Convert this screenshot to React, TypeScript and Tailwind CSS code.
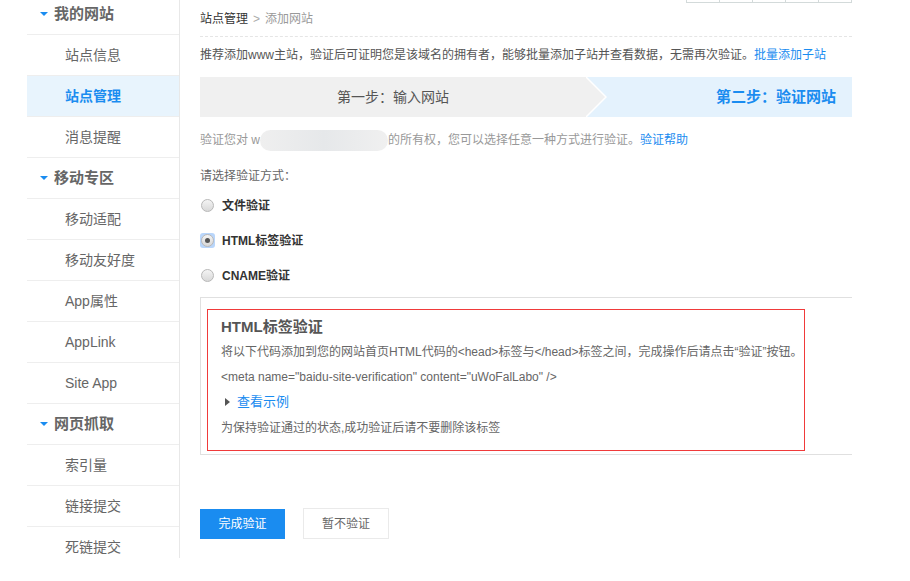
import React from 'react';

const FONT = '"Liberation Sans", "Noto Sans CJK SC", sans-serif';

type NavItem = { label: string; header?: boolean; active?: boolean };

const nav: NavItem[] = [
  { label: '我的网站', header: true },
  { label: '站点信息' },
  { label: '站点管理', active: true },
  { label: '消息提醒' },
  { label: '移动专区', header: true },
  { label: '移动适配' },
  { label: '移动友好度' },
  { label: 'App属性' },
  { label: 'AppLink' },
  { label: 'Site App' },
  { label: '网页抓取', header: true },
  { label: '索引量' },
  { label: '链接提交' },
  { label: '死链提交' },
];

function Caret() {
  return (
    <svg width="8" height="6" viewBox="0 0 8 6" className="mr-[6px]">
      <polygon points="0,1 8,1 4,5" fill="#1a8cf0" />
    </svg>
  );
}

function Sidebar() {
  return (
    <aside className="ml-[27px] w-[153px] h-[558px] overflow-hidden border-r border-[#e8e8e8] shrink-0">
      <div className="-mt-[6px]">
        {nav.map((item) => (
          <div
            key={item.label}
            className={
              'h-[41px] flex items-center border-b border-[#eeeeee] ' +
              (item.active ? 'bg-[#e8f4fd]' : '')
            }
          >
            {item.header ? (
              <div className="flex items-center pl-[13px] text-[15px] font-bold text-[#666]">
                <Caret />
                {item.label}
              </div>
            ) : (
              <div
                className={
                  'pl-[38px] text-[14px] ' +
                  (item.active ? 'font-bold text-[#1a8cf0]' : 'text-[#666]')
                }
              >
                {item.label}
              </div>
            )}
          </div>
        ))}
      </div>
    </aside>
  );
}

function Radio({ checked, label }: { checked?: boolean; label: string }) {
  return (
    <div className="h-[35px] flex items-center">
      <span
        className={
          'w-[15px] h-[15px] flex items-center justify-center rounded-[3px] ' +
          (checked ? 'bg-[#b9d6fb]' : '')
        }
      >
        <span className="w-[13px] h-[13px] rounded-full border border-[#b8b8b8] bg-gradient-to-b from-[#f4f4f4] to-[#d8d8d8] flex items-center justify-center">
          {checked && <span className="w-[5px] h-[5px] rounded-full bg-[#555]" />}
        </span>
      </span>
      <span className="ml-[7px] text-[12px] font-bold text-[#333]">{label}</span>
    </div>
  );
}

function Steps() {
  return (
    <div className="mt-[4px] h-[40px] flex bg-[#e4f2fd]">
      <div className="w-[386px] bg-[#f0f0f0] flex items-center justify-center text-[14px] text-[#555]">
        第一步：输入网站
      </div>
      <svg width="21" height="40" viewBox="0 0 21 40" className="shrink-0">
        <polygon points="0,0 20,20 0,40" fill="#f0f0f0" />
        <polyline points="0,0 20,20 0,40" fill="none" stroke="#ffffff" strokeWidth="1.5" />
      </svg>
      <div className="flex-1 flex items-center justify-end pr-[16px] text-[15px] font-bold text-[#1a8cf0]">
        第二步：验证网站
      </div>
    </div>
  );
}

function HtmlPanel() {
  return (
    <div className="mt-[4px] border-t border-b border-l border-[#e0e0e0] pl-[6px] pt-[11px] pb-[3px]">
      <div className="w-[598px] h-[142px] border border-[#f03a3a] pl-[13px] pt-[6px] text-[12px] text-[#666]">
        <div className="h-[23px] flex items-center text-[15px] font-bold text-[#555]">HTML标签验证</div>
        <div className="h-[25px] flex items-center">
          将以下代码添加到您的网站首页HTML代码的&lt;head&gt;标签与&lt;/head&gt;标签之间，完成操作后请点击“验证”按钮。
        </div>
        <div className="h-[25px] flex items-center">
          &lt;meta name="baidu-site-verification" content="uWoFalLabo" /&gt;
        </div>
        <div className="h-[26px] flex items-center">
          <svg width="5" height="8" viewBox="0 0 5 8" className="ml-[4px] mr-[7px]">
            <polygon points="0,0 5,4 0,8" fill="#555" />
          </svg>
          <span className="text-[13px] text-[#1a8cf0]">查看示例</span>
        </div>
        <div className="h-[25px] flex items-center">为保持验证通过的状态,成功验证后请不要删除该标签</div>
      </div>
    </div>
  );
}

export default function App() {
  return (
    <div className="w-[910px] h-[581px] bg-white flex overflow-hidden" style={{ fontFamily: FONT }}>
      <Sidebar />
      <main className="ml-[20px] w-[652px] shrink-0">
        <div className="h-[37px] flex justify-between items-start border-b border-dashed border-[#e5e5e5]">
          <div className="h-[37px] flex items-center text-[12px]">
            <span className="text-[#333]">站点管理</span>
            <span className="text-[#aaa] mx-[5px]">&gt;</span>
            <span className="text-[#999]">添加网站</span>
          </div>
          <div className="flex h-[3px] border-b border-l border-[#d3dada]">
            {[0, 1, 2, 3, 4].map((i) => (
              <div key={i} className="w-[33px] border-r border-[#d3dada]" />
            ))}
          </div>
        </div>
        <div className="h-[36px] flex items-center text-[12px] text-[#555]">
          推荐添加www主站，验证后可证明您是该域名的拥有者，能够批量添加子站并查看数据，无需再次验证。
          <span className="text-[#1a8cf0]">批量添加子站</span>
        </div>
        <Steps />
        <div className="h-[46px] flex items-center text-[12px] text-[#999]">
          验证您对 w
          <span className="inline-block w-[128px] h-[21px] rounded-full bg-gradient-to-r from-[#efefef] via-[#e6e8ea] to-[#f0f0f0]" />
          的所有权，您可以选择任意一种方式进行验证。
          <span className="text-[#1a8cf0]">验证帮助</span>
        </div>
        <div className="h-[26px] flex items-center text-[12px] text-[#666]">请选择验证方式：</div>
        <div className="-mt-[1px]">
          <Radio label="文件验证" />
          <Radio label="HTML标签验证" checked />
          <Radio label="CNAME验证" />
        </div>
        <HtmlPanel />
        <div className="mt-[53px] flex items-center gap-[18px]">
          <button className="w-[85px] h-[30px] bg-[#1a8cf0] text-white text-[12px]">完成验证</button>
          <button className="w-[86px] h-[31px] border border-[#eaeaea] bg-white text-[#666] text-[12px]">暂不验证</button>
        </div>
      </main>
    </div>
  );
}
